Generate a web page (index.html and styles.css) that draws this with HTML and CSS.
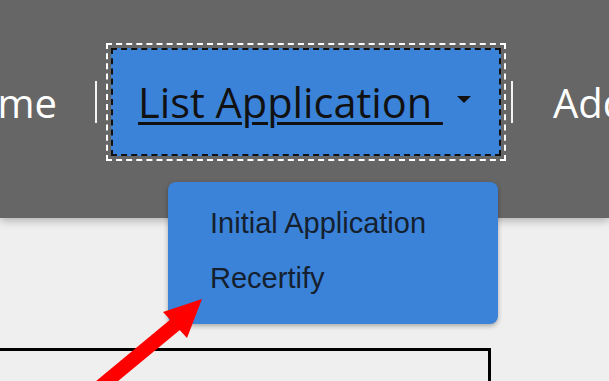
FILE: index.html
```html
<!DOCTYPE html>
<html lang="en">

<head>
    <meta charset="UTF-8">
    <meta name="viewport" content="width=device-width, initial-scale=1.0">
    <title>List Application</title>
    <link rel="stylesheet" href="styles.css">
</head>

<body>
    <header class="topbar">
        <nav class="nav">
            <a class="nav__link nav__link--home" href="#">Home</a>
            <span class="nav__sep"></span>
            <div class="nav__item">
                <a class="nav__button" href="#">
                    <span class="nav__label">List Application&nbsp;</span>
                    <span class="nav__caret"></span>
                </a>
                <ul class="dropdown">
                    <li class="dropdown__item">Initial Application</li>
                    <li class="dropdown__item">Recertify</li>
                </ul>
            </div>
            <span class="nav__sep nav__sep--right"></span>
            <a class="nav__link nav__link--add" href="#">Add Application</a>
        </nav>
    </header>

    <main class="content">
        <div class="panel-box"></div>
    </main>

    <svg class="pointer" width="609" height="381" viewBox="0 0 609 381">
        <line x1="60" y1="420" x2="176" y2="324" stroke="#ff0000" stroke-width="14" />
        <polygon points="202,299 163,312 187,338" fill="#ff0000" />
    </svg>
</body>

</html>
```

FILE: styles.css
```css
* {
    margin: 0;
    padding: 0;
    box-sizing: border-box;
}

body {
    width: 609px;
    height: 381px;
    overflow: hidden;
    background: #efefef;
    position: relative;
}

.topbar {
    height: 218px;
    padding-top: 48px;
    background: #666666;
    box-shadow: 0 3px 8px rgba(0, 0, 0, 0.25);
    position: relative;
    z-index: 1;
}

.nav {
    display: flex;
    align-items: center;
    height: 108px;
    margin-left: -56px;
    font-family: "Open Sans", sans-serif;
    font-size: 40px;
    white-space: nowrap;
}

.nav > * {
    flex-shrink: 0;
}

.nav__link {
    color: #fff;
    text-decoration: none;
}

.nav__sep {
    width: 2px;
    height: 42px;
    margin: 0 14px 0 38px;
    background: #f4f4f4;
}

.nav__sep--right {
    margin: 0 40px 0 10px;
}

.nav__item {
    position: relative;
}

.nav__button {
    display: flex;
    align-items: center;
    width: 390px;
    height: 108px;
    padding-left: 25px;
    background: #3b83d9;
    border: 2px dashed #111;
    outline: 2px dashed #fff;
    outline-offset: 3px;
    color: #111;
    font-size: 41.5px;
    text-decoration: none;
}

.nav__label {
    text-decoration: underline;
    text-decoration-thickness: 3px;
    text-underline-offset: 4px;
}

.nav__caret {
    margin: -6px 0 0 14px;
    border-top: 7px solid #111;
    border-left: 7px solid transparent;
    border-right: 7px solid transparent;
}

.dropdown {
    position: absolute;
    top: 134px;
    left: 57px;
    width: 330px;
    height: 142px;
    padding: 14px 0 0 42px;
    list-style: none;
    background: #3b83d9;
    border-radius: 8px;
    box-shadow: 0 2px 5px rgba(0, 0, 0, 0.3);
    font-family: "Liberation Sans", Arial, sans-serif;
    font-size: 29px;
    line-height: 55px;
    color: #15202e;
}

.content {
    padding-top: 130px;
}

.panel-box {
    width: 501px;
    height: 120px;
    margin-left: -10px;
    border: 3px solid #000;
}

.pointer {
    position: absolute;
    top: 0;
    left: 0;
    z-index: 2;
}
```
